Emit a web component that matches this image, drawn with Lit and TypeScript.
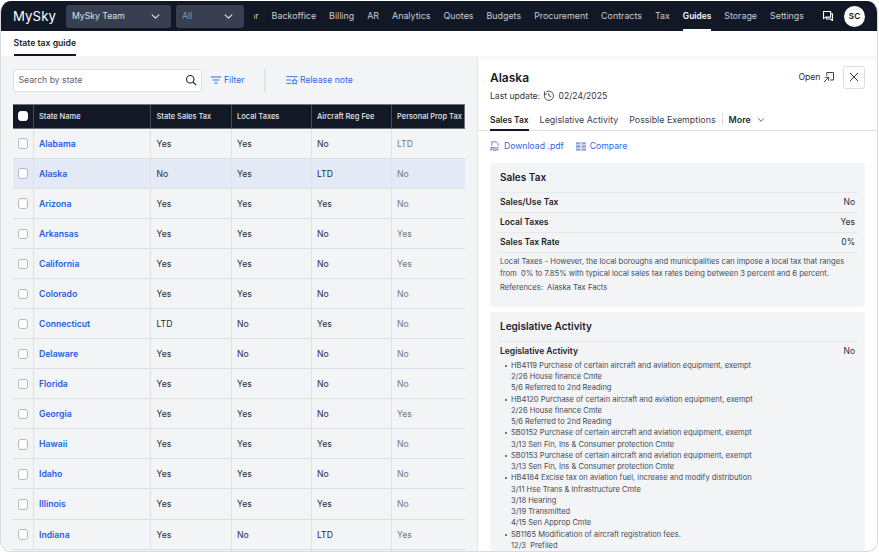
import { LitElement, html, css, svg } from "lit";
import { customElement } from "lit/decorators.js";

const rows = [
  ["Alabama", "Yes", "Yes", "No", "LTD"],
  ["Alaska", "No", "Yes", "LTD", "No"],
  ["Arizona", "Yes", "Yes", "Yes", "No"],
  ["Arkansas", "Yes", "Yes", "No", "Yes"],
  ["California", "Yes", "Yes", "No", "Yes"],
  ["Colorado", "Yes", "Yes", "No", "No"],
  ["Connecticut", "LTD", "No", "Yes", "No"],
  ["Delaware", "Yes", "No", "No", "No"],
  ["Florida", "Yes", "Yes", "No", "No"],
  ["Georgia", "Yes", "Yes", "No", "Yes"],
  ["Hawaii", "Yes", "Yes", "Yes", "No"],
  ["Idaho", "Yes", "Yes", "No", "No"],
  ["Illinois", "Yes", "Yes", "Yes", "No"],
  ["Indiana", "Yes", "No", "LTD", "Yes"],
  ["", "", "", "", ""],
];
const nav = ["Calendar", "Backoffice", "Billing", "AR", "Analytics", "Quotes", "Budgets", "Procurement", "Contracts", "Tax", "Guides", "Storage", "Settings"];
const leg: [string, string[]][] = [
  ["HB4119 Purchase of certain aircraft and aviation equipment, exempt", ["2/26 House finance Cmte", "5/6 Referred to 2nd Reading"]],
  ["HB4120 Purchase of certain aircraft and aviation equipment, exempt", ["2/26 House finance Cmte", "5/6 Referred to 2nd Reading"]],
  ["SB0152 Purchase of certain aircraft and aviation equipment, exempt", ["3/13 Sen Fin, Ins & Consumer protection Cmte"]],
  ["SB0153 Purchase of certain aircraft and aviation equipment, exempt", ["3/13 Sen Fin, Ins & Consumer protection Cmte"]],
  ["HB4184 Excise tax on aviation fuel, increase and modify distribution", ["3/11 Hse Trans & Infrastructure Cmte", "3/18 Hearing", "3/19 Transmitted", "4/15 Sen Approp Cmte"]],
  ["SB1165 Modification of aircraft registration fees.", ["12/3\u00a0 Prefiled"]],
];
const chev = svg`<path d="M3 5.5l5 5 5-5" fill="none" stroke="currentColor" stroke-width="1.5" stroke-linecap="round" stroke-linejoin="round"/>`;

@customElement("app-root")
export class AppRoot extends LitElement {
  static styles = css`
    :host { display: block; width: 879px; height: 552px; background: #fff; font-family: Inter, "Noto Sans", sans-serif; font-size: 8.67px; color: #1f2533; padding-top: 1px; box-sizing: border-box; }
    * { box-sizing: border-box; }
    .frame { width: 878px; height: 551px; display: flex; flex-direction: column; overflow: hidden; border-radius: 11px; border-right: 1px solid #d9dbe0; border-bottom: 1px solid #d9dbe0; border-left: 1px solid #d9dbe0; }
    header { flex: none; height: 30px; background: #121826; display: flex; align-items: center; padding: 0 12px 0 12px; color: #c9ccd4; }
    .logo { font-size: 13.2px; font-weight: 400; color: #fff; letter-spacing: 0.1px; width: 53px; flex: none; }
    .sel { flex: none; height: 23px; border-radius: 3px; background: #373f51; display: flex; align-items: center; justify-content: space-between; padding: 0 10px 0 6px; color: #dfe1e6; margin-right: 5px; }
    .sel.a { width: 105px; }
    .sel.b { width: 68px; color: #8e94a1; margin-right: 0; }
    .sel svg { width: 11px; height: 11px; color: #e8e9ec; }
    .nav { flex: 1; min-width: 0; overflow: hidden; display: flex; justify-content: flex-end; gap: 13px; height: 30px; align-items: center; margin-left: 10px; font-size: 8.9px; }
    .nav span { flex: none; height: 30px; line-height: 30px; position: relative; }
    .nav span.on { color: #fff; font-weight: 600; font-size: 8.4px; }
    .nav span.on::after { content: ""; position: absolute; left: 0; right: 0; bottom: 0; height: 2px; background: #fff; }
    .hicons { flex: none; display: flex; align-items: center; margin-left: 18px; gap: 10px; }
    .hicons svg { width: 12px; height: 12px; color: #fff; }
    .avatar { width: 21px; height: 21px; border-radius: 50%; background: #fff; color: #121826; font-weight: 600; font-size: 8.2px; display: flex; align-items: center; justify-content: center; }
    .sub { flex: none; height: 25px; background: #fff; padding-left: 12.5px; display: flex; }
    .sub span { height: 25px; padding-top: 7px; font-weight: 600; color: #1b2230; border-bottom: 2px solid #121826; }
    .main { flex: 1; min-height: 0; display: flex; }
    .left { width: 476px; flex: none; background: #f3f4f6; padding: 12.5px 0 0 12px; overflow: hidden; }
    .tools { display: flex; align-items: center; height: 23px; margin-bottom: 12px; }
    .search { width: 189px; height: 23px; background: #fff; border: 1px solid #dcdee3; border-radius: 3px; display: flex; align-items: center; justify-content: space-between; padding: 0 4px 0 4.5px; color: #5b6270; }
    .search svg { width: 12px; height: 12px; color: #1f2533; }
    .tbtn { display: flex; align-items: center; gap: 2px; color: #3167e3; }
    .tbtn svg { width: 12px; height: 12px; }
    .filter { margin-left: 8px; width: 56px; height: 23px; border-right: 2px solid #e3e5e9; }
    .release { margin-left: 20px; }
    .table { width: 452px; }
    .thead, .row { display: grid; grid-template-columns: 20.5px 117.5px 80.5px 80px 80px 73.5px; }
    .thead { height: 25px; background: #121826; color: #e6e8ec; font-weight: 500; font-size: 7.5px; border: 1px solid #6d7482; border-width: 1px 1px 1px 0; }
    .thead > div { display: flex; align-items: center; padding-left: 5.5px; border-right: 1px solid #444b5a; white-space: nowrap; }
    .thead > div:first-child { padding: 0; justify-content: center; }
    .thead > div:last-child { border-right: none; }
    .row { height: 30.08px; border-bottom: 1px solid #dcdfe5; }
    .row.on { background: #e4eaf5; }
    .row > div { display: flex; align-items: center; padding: 1px 0 0 5.5px; border-right: 1px solid #dfe1e6; color: #272d3a; }
    .row > div:first-child { padding: 1px 0 0; justify-content: center; border-right-width: 1.5px; }
    .row > div:last-child { border-right: none; color: #73777f; }
    .row > .name { color: #1f5fe0; font-weight: 600; }
    .cb { width: 10.5px; height: 10.5px; border-radius: 3px; border: 1px solid #b4b8c2; background: #fff; }
    .thead .cb { background: #fff; border-color: #fff; }
    .right { flex: 1; min-width: 0; background: #fff; border-left: 1px solid #e4e6ea; box-shadow: inset 0 7px 6px -6px rgba(20,25,40,.07); padding: 10px 12px 0 12px; overflow: hidden; }
    .top { display: flex; justify-content: space-between; align-items: flex-start; height: 32px; }
    h1 { margin: 3.5px 0 0; font-size: 12px; line-height: 15px; font-weight: 600; color: #171c28; }
    .upd { display: flex; align-items: center; gap: 3px; margin-top: 5.5px; color: #30363f; line-height: 12px; font-size: 8.6px; white-space: nowrap; }
    .upd svg { width: 11.5px; height: 11.5px; margin-right: 1px; }
    .acts { display: flex; align-items: center; }
    .open { display: flex; align-items: center; gap: 2px; color: #272d3a; margin-right: 8px; }
    .open svg { width: 12px; height: 12px; }
    .close { width: 22.5px; height: 22.5px; border: 1px solid #dcdee3; border-radius: 3px; display: flex; align-items: center; justify-content: center; }
    .close svg { width: 12px; height: 12px; color: #1f2533; }
    .tabs { display: flex; margin: 15px -12px 0; padding-left: 12px; height: 17.5px; border-bottom: 1px solid #dfe1e6; align-items: flex-start; color: #3b4250; font-size: 8.9px; }
    .tabs span { height: 17.5px; line-height: 14px; margin-right: 11px; white-space: nowrap; }
    .tabs .on { font-weight: 600; font-size: 8.4px; color: #171c28; border-bottom: 2px solid #121826; }
    .tabs .more { display: flex; align-items: center; gap: 6px; font-weight: 600; color: #272d3a; margin: 0; padding-left: 6px; border-left: 1px solid #d9dbe0; height: 13px; margin-left: -5px; }
    .tabs .more svg { width: 8px; height: 8px; }
    .links { display: flex; gap: 12px; height: 15px; margin: 8px 0 9.5px; align-items: center; color: #3167e3; }
    .links div { display: flex; align-items: center; gap: 4px; }
    .links svg { width: 10px; height: 11px; }
    .card { background: #f3f4f6; border-radius: 3px; padding: 6px 7.5px 0 7.5px; margin: 0 0 5.5px; width: 375px; }
    .card h2 { margin: 0 0 5.5px; padding-left: 2.5px; font-size: 10px; line-height: 17px; font-weight: 600; color: #1b2230; }
    .kv { display: flex; justify-content: space-between; height: 20.1px; align-items: center; border-top: 1px solid #e6e8eb; padding: 0 2.5px; color: #272d3a; font-size: 8.5px; }
    .kv b { font-weight: 600; color: #171c28; }
    .note { border-top: 1px solid #e6e8eb; font-size: 7.6px; line-height: 11.2px; color: #444b58; padding: 3.7px 2.5px 0; }
    .refs { font-size: 7.6px; line-height: 11px; color: #444b58; margin-top: 3px; padding: 0 2.5px 13.9px; }
    ul { margin: -1px 0 0; padding: 0 0 0 13.5px; font-size: 7.52px; line-height: 11.25px; color: #444b58; list-style: none; }
    li { position: relative; }
    li::before { content: ""; position: absolute; left: -6px; top: 5px; width: 2px; height: 2px; border-radius: 50%; background: #444b58; }
  `;
  render() {
    return html`<div class="frame">
      <header>
        <div class="logo">MySky</div>
        <div class="sel a">MySky Team <svg viewBox="0 0 16 16">${chev}</svg></div>
        <div class="sel b">All <svg viewBox="0 0 16 16">${chev}</svg></div>
        <div class="nav">${nav.map(n => html`<span class=${n === "Guides" ? "on" : ""}>${n}</span>`)}</div>
        <div class="hicons">
          <svg viewBox="0 0 16 16" fill="none" stroke="currentColor" stroke-width="1.5" stroke-linejoin="round"><path d="M2 2h9.5v7.5H5L2 11.5z"/><path d="M11.5 5H14v9l-2.5-2H6V9.5"/></svg>
          <div class="avatar">SC</div>
        </div>
      </header>
      <div class="sub"><span>State tax guide</span></div>
      <div class="main">
        <div class="left">
          <div class="tools">
            <div class="search">Search by state <svg viewBox="0 0 16 16" fill="none" stroke="currentColor" stroke-width="1.5" stroke-linecap="round"><circle cx="7" cy="7" r="5"/><path d="M11 11l3.5 3.5"/></svg></div>
            <div class="tbtn filter"><svg viewBox="0 0 16 16" fill="none" stroke="currentColor" stroke-width="1.5" stroke-linecap="round"><path d="M1.5 4h13M4 8h8M6.5 12h3"/></svg>Filter</div>
            <div class="tbtn release"><svg viewBox="0 0 16 16" fill="none" stroke="currentColor" stroke-width="1.2" stroke-linecap="round"><path d="M1 3.5h14M1 8h5.5M1 12.5h5.5"/><path d="M11.5 6.5l1.2 2.4 2.5.3-1.8 1.8.5 2.6-2.4-1.3-2.4 1.3.5-2.6-1.8-1.8 2.5-.3z" stroke-linejoin="round"/></svg>Release note</div>
          </div>
          <div class="table">
            <div class="thead">
              <div><span class="cb"></span></div><div>State Name</div><div>State Sales Tax</div><div>Local Taxes</div><div>Aircraft Reg Fee</div><div>Personal Prop Tax</div>
            </div>
            ${rows.map((r, i) => html`<div class="row ${i === 1 ? "on" : ""}">
              <div><span class="cb"></span></div>
              <div class="name">${r[0]}</div><div>${r[1]}</div><div>${r[2]}</div><div>${r[3]}</div><div>${r[4]}</div>
            </div>`)}
          </div>
        </div>
        <div class="right">
          <div class="top">
            <div>
              <h1>Alaska</h1>
              <div class="upd">Last update: <svg viewBox="0 0 16 16" fill="none" stroke="currentColor" stroke-width="1.2" stroke-linecap="round"><path d="M5 2.2A6.5 6.5 0 1 1 1.9 6"/><path d="M8 4.5V8l3 1M2 2.5v3.2h3"/></svg> 02/24/2025</div>
            </div>
            <div class="acts">
              <div class="open">Open <svg viewBox="0 0 16 16" fill="none" stroke="currentColor" stroke-width="1.2" stroke-linecap="round" stroke-linejoin="round"><path d="M5 6V2h9v10h-4"/><path d="M1.5 14.5L7.5 8.5M3.5 8.5h4v4"/></svg></div>
              <div class="close"><svg viewBox="0 0 16 16" fill="none" stroke="currentColor" stroke-width="1.2" stroke-linecap="round"><path d="M3 3l10 10M13 3L3 13"/></svg></div>
            </div>
          </div>
          <div class="tabs">
            <span class="on">Sales Tax</span><span>Legislative Activity</span><span>Possible Exemptions</span>
            <span class="more">More <svg viewBox="0 0 16 16">${chev}</svg></span>
          </div>
          <div class="links">
            <div><svg viewBox="0 0 12 14" fill="none" stroke="currentColor" stroke-width="1"><path d="M2 6V1h5.5L10 3.5V6"/><text x="0" y="13" font-size="5.5" font-weight="700" fill="currentColor" stroke="none" font-family="Inter">PDF</text></svg>Download .pdf</div>
            <div><svg viewBox="0 0 12 12" fill="#8fa5d8"><path d="M0 .8h5.4v2.8H0zM6.6 .8H12v2.8H6.6zM0 4.6h5.4v2.8H0zM6.6 4.6H12v2.8H6.6zM0 8.4h5.4v2.8H0zM6.6 8.4H12v2.8H6.6z"/></svg>Compare</div>
          </div>
          <div class="card">
            <h2>Sales Tax</h2>
            <div class="kv"><b>Sales/Use Tax</b><span>No</span></div>
            <div class="kv"><b>Local Taxes</b><span>Yes</span></div>
            <div class="kv"><b>Sales Tax Rate</b><span>0%</span></div>
            <div class="note">Local Taxes - However, the local boroughs and municipalities can impose a local tax that ranges from&nbsp; 0% to 7.85% with typical local sales tax rates being between 3 percent and 6 percent.</div>
            <div class="refs">References:&nbsp; Alaska Tax Facts</div>
          </div>
          <div class="card">
            <h2>Legislative Activity</h2>
            <div class="kv"><b>Legislative Activity</b><span>No</span></div>
            <ul>${leg.map(([t, s]) => html`<li>${t}${s.map(x => html`<br>${x}`)}</li>`)}</ul>
          </div>
        </div>
      </div>
    </div>`;
  }
}
